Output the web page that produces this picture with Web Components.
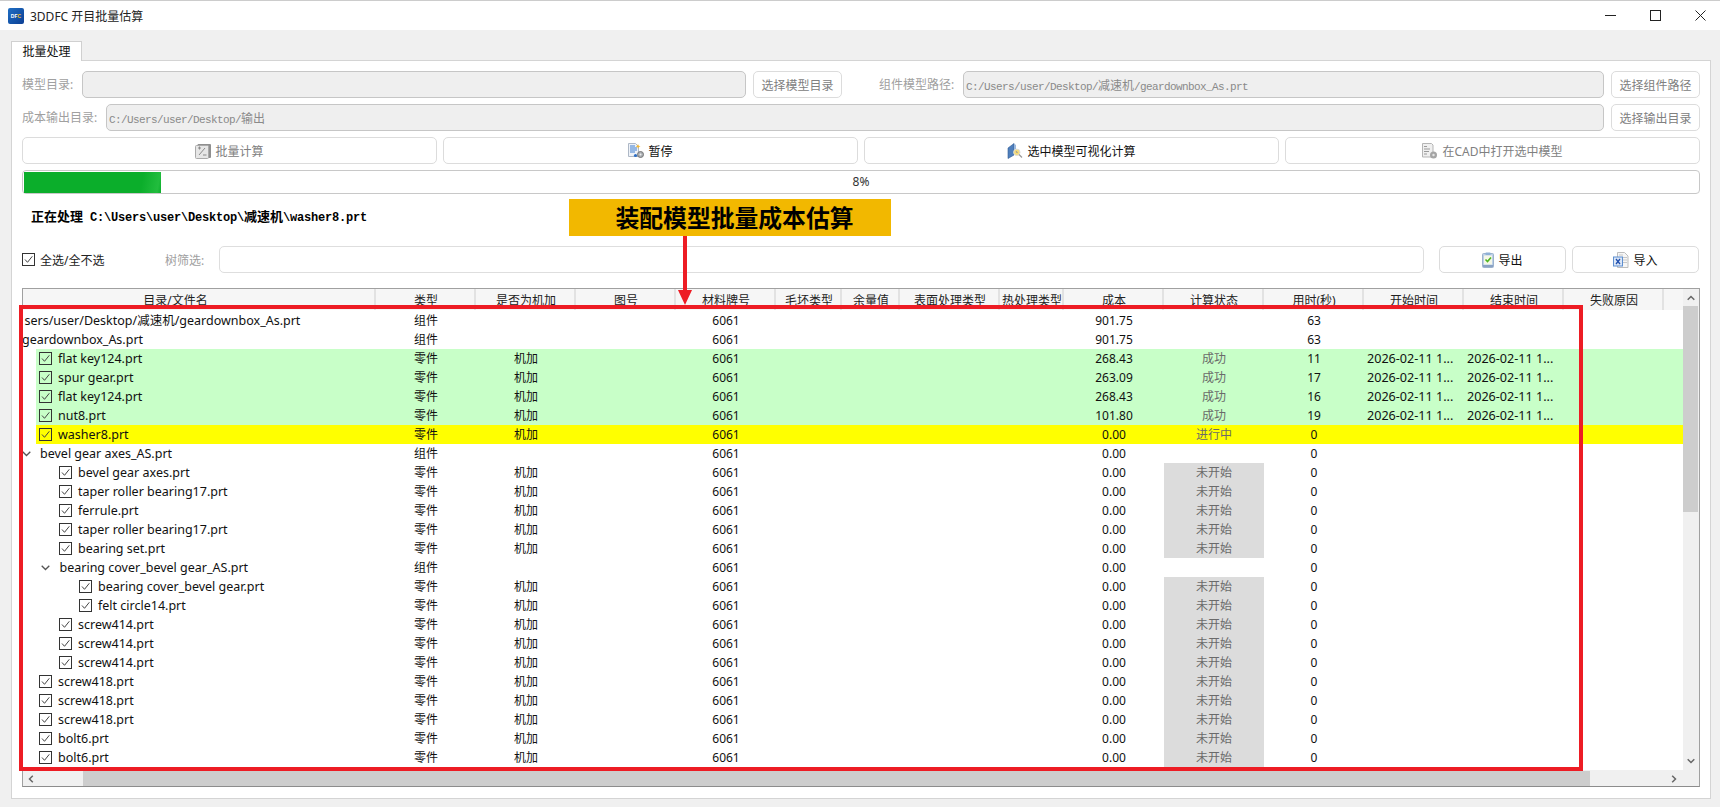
<!DOCTYPE html>
<html lang="zh">
<head>
<meta charset="utf-8">
<title>3DDFC 开目批量估算</title>
<style>
  html, body {
    margin: 0;
    height: 807px;
    overflow: hidden;
    background: #f0f0f0;
    font: 12px "Noto Sans", "Noto Sans CJK SC", sans-serif;
    color: #111;
  }
  body { position: relative; }
</style>
</head>
<body>
<title-bar>3DDFC 开目批量估算</title-bar>
<tab-pane label="批量处理">
  <form-row>
    <field-label style="width:60px">模型目录:</field-label>
    <path-field style="width:664px"></path-field>
    <ui-button style="width:89px;margin-left:7px" disabled>选择模型目录</ui-button>
    <field-label style="width:84px;margin-left:37px">组件模型路径:</field-label>
    <path-field style="flex:1">C:/Users/user/Desktop/减速机/geardownbox_As.prt</path-field>
    <ui-button style="width:89px;margin-left:7px" disabled>选择组件路径</ui-button>
  </form-row>
  <form-row>
    <field-label style="width:84px">成本输出目录:</field-label>
    <path-field style="flex:1">C:/Users/user/Desktop/输出</path-field>
    <ui-button style="width:89px;margin-left:7px" disabled>选择输出目录</ui-button>
  </form-row>
  <form-row class="actions">
    <ui-button style="flex:1" icon="calc" disabled>批量计算</ui-button>
    <ui-button style="flex:1;margin-left:6px" icon="pause">暂停</ui-button>
    <ui-button style="flex:1;margin-left:6px" icon="visual">选中模型可视化计算</ui-button>
    <ui-button style="flex:1;margin-left:6px" icon="cad" disabled>在CAD中打开选中模型</ui-button>
  </form-row>
  <progress-strip value="8"></progress-strip>
  <status-line>正在处理 C:\Users\user\Desktop\减速机\washer8.prt</status-line>
  <filter-row></filter-row>
  <tree-table></tree-table>
</tab-pane>
<annotation-overlay></annotation-overlay>

<script>
  const ICONS = {
    calc: `<svg width="16" height="16" viewBox="0 0 16 16"><rect x="2.5" y="1" width="13.500" height="14" rx="1" fill="#8f8f8f"/><rect x="0.5" y="2.5" width="13" height="13" rx="1" fill="#e6e6e6" stroke="#aaa"/><path d="M3 5h3M4.500 3.500v3M8 12h3.500M4 12l6-7" stroke="#8a8a8a" fill="none"/></svg>`,
    pause: `<svg width="16" height="16" viewBox="0 0 16 16"><path d="M.5.5h7l3 3v10H.5z" fill="#eef2f8" stroke="#aeb8c6"/><path d="M2 3h5M2 5h7M2 7h7M2 9h5" stroke="#3f7fd0"/><path d="M10 1l.8 1.700 1.700.6-1.700.7-.8 1.700-.7-1.700-1.600-.7 1.600-.6z" fill="#f2b632"/><circle cx="7.500" cy="12.500" r="1.600" fill="#2f6fc4"/><circle cx="12.500" cy="11.500" r="3" fill="#a9adb2" stroke="#777"/><circle cx="12.500" cy="11.500" r="1" fill="#eee"/></svg>`,
    visual: `<svg width="16" height="16" viewBox="0 0 16 16"><path d="M1 5l6-4.500V12l-6 3.500z" fill="#4f7fbc" stroke="#2f5a94" stroke-width=".6"/><path d="M7 .5l2 1.500v5H7z" fill="#9db9dc"/><circle cx="9.800" cy="9.300" r="3.200" fill="#f6dc78" stroke="#dcdcdc"/><path d="M9 8.300l1.500 1.500M12 11.500l3 3" stroke="#9a9a9a" stroke-width="1.200"/></svg>`,
    cad: `<svg width="16" height="16" viewBox="0 0 16 16"><path d="M.5.5h9l1.500 1.500v12H.5z" fill="#f0f0f0" stroke="#b5b5b5"/><path d="M2 3.500h3M2 6h6M2 8.500h5M2 11h3" stroke="#9a9a9a"/><circle cx="11.500" cy="12" r="3.500" fill="#a5a5a5"/><circle cx="11.500" cy="12" r="1.200" fill="#e4e4e4"/></svg>`,
    clip: `<svg width="12" height="16" viewBox="0 0 12 16"><rect x=".5" y="1.500" width="11" height="14" rx="1" fill="#bcd0e8" stroke="#9cb2cc"/><rect x="2" y="3.500" width="8" height="9" fill="#f5f7e8"/><rect x="3.500" y=".5" width="5" height="2.500" rx=".5" fill="#8fb0d6"/><path d="M3.500 7.500l2 2 3.500-4" stroke="#4fb51f" stroke-width="1.600" fill="none"/><rect x="1" y="13" width="10" height="2" fill="#8aa2c4"/></svg>`,
    xls: `<svg width="16" height="16" viewBox="0 0 16 16"><path d="M4.500.5h7l3.500 3.500v11.500H4.500z" fill="#f6f6f6" stroke="#bdbdbd"/><path d="M10 5.500h4M10 8h4M10 10.500h4M6 3h4" stroke="#c8c8c8"/><rect x=".5" y="5" width="9" height="9" fill="#dbe6f6" stroke="#5d8ed0"/><path d="M3 7l4 5M7 7l-4 5" stroke="#1f4fae" stroke-width="1.300"/></svg>`
  };

  const wrapCjk = text => text.replace(/[^\x00-\x7f]+/g, m => `<span class="cjk">${m}</span>`);

  class TitleBar extends HTMLElement {
    constructor() {
      super();
      this.attachShadow({ mode: 'open' }).innerHTML = `
        <style>
          :host { display: flex; align-items: center; height: 29px; background: #fff; border-top: 1px solid #ccc; }
          .logo { width: 16px; height: 16px; margin-left: 8px; border-radius: 2px; background: linear-gradient(135deg, #1f6fc4, #0c3f94); color: #fff; font: bold 5px/16px "Liberation Sans", sans-serif; text-align: center; }
          .logo b { color: #f6c21c; }
          .text { margin-left: 6px; font-size: 12px; color: #222; flex: 1; }
          svg { display: block; margin-left: 34px; }
          .ctls { display: flex; margin-right: 14px; }
        </style>
        <div class="logo">DF<b>C</b></div>
        <div class="text"><slot></slot></div>
        <div class="ctls">
          <svg width="11" height="11"><path d="M0 5.500h11" stroke="#222"/></svg>
          <svg width="11" height="11"><rect x=".5" y=".5" width="10" height="10" fill="none" stroke="#222"/></svg>
          <svg width="11" height="11"><path d="M.5.5l10 10M10.500.5l-10 10" stroke="#222" fill="none"/></svg>
        </div>`;
    }
  }
  customElements.define('title-bar', TitleBar);

  class TabPane extends HTMLElement {
    constructor() {
      super();
      this.attachShadow({ mode: 'open' }).innerHTML = `
        <style>
          :host { display: block; padding: 11px 9px 0 11px; }
          .head { height: 19px; }
          .tab { box-sizing: border-box; width: 71px; height: 20px; line-height: 19px; text-align: center; background: #fff; border: 1px solid #d0d0d0; border-bottom: 0; color: #111; position: relative; z-index: 1; }
          .body { box-sizing: border-box; height: 739px; background: #fff; border: 1px solid #d4d4d4; padding: 10px 10px 0; display: flex; flex-direction: column; }
        </style>
        <div class="head"><div class="tab"></div></div>
        <div class="body"><slot></slot></div>`;
    }
    connectedCallback() {
      this.shadowRoot.querySelector('.tab').textContent = this.getAttribute('label');
    }
  }
  customElements.define('tab-pane', TabPane);

  class FormRow extends HTMLElement {
    constructor() {
      super();
      this.attachShadow({ mode: 'open' }).innerHTML = `
        <style>:host { display: flex; align-items: stretch; height: 27px; margin-bottom: 6px; flex: none; }</style>
        <slot></slot>`;
    }
  }
  customElements.define('form-row', FormRow);

  class FieldLabel extends HTMLElement {
    constructor() {
      super();
      this.attachShadow({ mode: 'open' }).innerHTML = `
        <style>:host { display: block; flex: none; line-height: 27px; color: #a0a0a0; white-space: nowrap; }</style>
        <slot></slot>`;
    }
  }
  customElements.define('field-label', FieldLabel);

  class PathField extends HTMLElement {
    constructor() {
      super();
      this.attachShadow({ mode: 'open' }).innerHTML = `
        <style>
          :host { display: block; box-sizing: border-box; background: #efefef; border: 1px solid #c6c6c6; border-radius: 5px; padding-left: 2px; min-width: 0;
                  font: 11px/25px "Liberation Mono", monospace; letter-spacing: -0.6px; color: #8a8a8a; white-space: nowrap; overflow: hidden; }
          .cjk { font: 12px/25px "Noto Sans CJK SC", sans-serif; letter-spacing: 0; }
        </style>
        <span id="t"></span>`;
    }
    connectedCallback() {
      this.shadowRoot.getElementById('t').innerHTML = wrapCjk(this.textContent);
    }
  }
  customElements.define('path-field', PathField);

  class UiButton extends HTMLElement {
    constructor() {
      super();
      this.attachShadow({ mode: 'open' }).innerHTML = `
        <style>
          :host { display: flex; box-sizing: border-box; align-items: center; justify-content: center; flex: none; min-width: 0; background: #fff; border: 1px solid #dcdcdc; border-radius: 5px; color: #111; white-space: nowrap; }
          :host([disabled]) { color: #808080; }
          #i { display: flex; margin-right: 4px; }
          #i:empty { display: none; }
        </style>
        <span id="i"></span><slot></slot>`;
    }
    connectedCallback() {
      const icon = this.getAttribute('icon');
      if (icon) this.shadowRoot.getElementById('i').innerHTML = ICONS[icon];
    }
  }
  customElements.define('ui-button', UiButton);

  class ProgressStrip extends HTMLElement {
    constructor() {
      super();
      this.attachShadow({ mode: 'open' }).innerHTML = `
        <style>
          :host { display: block; box-sizing: border-box; flex: none; position: relative; height: 24px; border: 1px solid #c8c8c8; border-radius: 4px; background: #fff; }
          .chunk { position: absolute; left: 1px; top: 1px; bottom: 0; width: 137px; background: linear-gradient(100deg, #0bae2b 85%, #22bd3e 97%, #0bae2b); }
          .pct { display: block; text-align: center; line-height: 22px; color: #333; position: relative; }
        </style>
        <div class="chunk"></div><span class="pct"></span>`;
    }
    connectedCallback() {
      this.shadowRoot.querySelector('.pct').textContent = this.getAttribute('value') + '%';
    }
  }
  customElements.define('progress-strip', ProgressStrip);

  class StatusLine extends HTMLElement {
    constructor() {
      super();
      this.attachShadow({ mode: 'open' }).innerHTML = `
        <style>
          :host { display: block; flex: none; height: 52px; padding-left: 9px; box-sizing: border-box; padding-top: 12px; font: bold 12px/20px "Liberation Mono", monospace; letter-spacing: -0.2px; white-space: nowrap; color: #000; }
          .cjk { font: bold 13px/20px "Noto Sans CJK SC", sans-serif; letter-spacing: 0; }
        </style>
        <span id="t"></span>`;
    }
    connectedCallback() {
      this.shadowRoot.getElementById('t').innerHTML = wrapCjk(this.textContent);
    }
  }
  customElements.define('status-line', StatusLine);

  class CheckBox extends HTMLElement {
    constructor() {
      super();
      this.attachShadow({ mode: 'open' }).innerHTML = `
        <style>:host { display: block; width: 13px; height: 13px; flex: none; } svg { display: block; }</style>
        <svg width="13" height="13" viewBox="0 0 13 13"><rect x=".5" y=".5" width="12" height="12" fill="none" stroke="#333"/><path d="M3 6.500l2.500 2.800 4.800-6" fill="none" stroke="#444"/></svg>`;
    }
  }
  customElements.define('check-box', CheckBox);

  class FilterRow extends HTMLElement {
    constructor() {
      super();
      this.attachShadow({ mode: 'open' }).innerHTML = `
        <style>
          :host { display: flex; flex: none; height: 27px; align-items: center; margin-bottom: 15px; }
          .all { margin-left: 5px; width: 125px; color: #222; }
          .lab { width: 54px; color: #a0a0a0; }
          .search { box-sizing: border-box; width: 1205px; height: 27px; border: 1px solid #dedede; border-radius: 5px; background: #fff; }
          ui-button { height: 27px; }
        </style>
        <check-box></check-box>
        <span class="all">全选/全不选</span>
        <span class="lab">树筛选:</span>
        <div class="search"></div>
        <ui-button style="width:127px;margin-left:15px" icon="clip">导出</ui-button>
        <ui-button style="width:127px;margin-left:6px" icon="xls">导入</ui-button>`;
    }
  }
  customElements.define('filter-row', FilterRow);

  const COLS = '353px 100px 100px 100px 100px 66px 58px 100px 64px 100px 100px 100px 100px 100px 100px 1fr';

  class TreeRow extends HTMLElement {
    constructor() {
      super();
      this.attachShadow({ mode: 'open' }).innerHTML = `
        <style>
          :host { display: grid; grid-template-columns: ${COLS}; height: 19px; line-height: 19px; text-align: center; color: #111; white-space: nowrap; }
          :host(.done) { background: linear-gradient(to right, transparent 13px, #c8ffc8 13px); }
          :host(.run) { background: linear-gradient(to right, transparent 13px, #ffff00 13px); }
          .clip { overflow: hidden; }
          .name { display: flex; align-items: center; text-align: left; font-size: 12.5px; }
          .name check-box { margin-right: 6px; }
          .arrow { flex: none; width: 12px; display: flex; justify-content: center; margin-right: 8px; }
          .status { color: #6a6a6a; }
          .status.idle { background: #dcdcdc; }
          .time { text-align: left; padding-left: 3px; overflow: hidden; font-size: 12.6px; }
        </style>`;
    }
    set data(r) {
      const head = r.part
        ? `<check-box></check-box><span>${r.name}</span>`
        : (r.open ? `<span class="arrow"><svg width="9" height="6"><path d="M.7.7l3.800 3.800L8.300.7" fill="none" stroke="#555" stroke-width="1.300"/></svg></span>` : '') + `<span>${r.name}</span>`;
      const idle = r.status === '未开始' ? 'idle' : '';
      this.shadowRoot.innerHTML += `
        <div class="clip"><div class="name" style="margin-left:${r.x}px">${head}</div></div>
        <div>${r.part ? '零件' : '组件'}</div><div>${r.part ? '机加' : ''}</div><div></div><div>6061</div>
        <div></div><div></div><div></div><div></div>
        <div>${r.cost}</div>
        <div class="status ${idle}">${r.status || ''}</div>
        <div>${r.secs}</div>
        <div class="time">${r.start || ''}</div><div class="time">${r.start || ''}</div>
        <div></div><div></div>`;
    }
  }
  customElements.define('tree-row', TreeRow);

  const part = (x, name, cost, secs, status, start) => ({ part: true, x, name, cost, secs, status, start });
  const asm = (x, name, cost, secs, open) => ({ x, name, cost, secs, open });
  const STAMP = '2026-02-11 1...';
  const ROWS = [
    asm(1.5, 'sers/user/Desktop/减速机/geardownbox_As.prt', '901.75', 63),
    asm(-1, 'geardownbox_As.prt', '901.75', 63),
    { ...part(16, 'flat key124.prt', '268.43', 11, '成功', STAMP), cls: 'done' },
    { ...part(16, 'spur gear.prt', '263.09', 17, '成功', STAMP), cls: 'done' },
    { ...part(16, 'flat key124.prt', '268.43', 16, '成功', STAMP), cls: 'done' },
    { ...part(16, 'nut8.prt', '101.80', 19, '成功', STAMP), cls: 'done' },
    { ...part(16, 'washer8.prt', '0.00', 0, '进行中'), cls: 'run' },
    asm(-3, 'bevel gear axes_AS.prt', '0.00', 0, true),
    part(36, 'bevel gear axes.prt', '0.00', 0, '未开始'),
    part(36, 'taper roller bearing17.prt', '0.00', 0, '未开始'),
    part(36, 'ferrule.prt', '0.00', 0, '未开始'),
    part(36, 'taper roller bearing17.prt', '0.00', 0, '未开始'),
    part(36, 'bearing set.prt', '0.00', 0, '未开始'),
    asm(16.5, 'bearing cover_bevel gear_AS.prt', '0.00', 0, true),
    part(56, 'bearing cover_bevel gear.prt', '0.00', 0, '未开始'),
    part(56, 'felt circle14.prt', '0.00', 0, '未开始'),
    part(36, 'screw414.prt', '0.00', 0, '未开始'),
    part(36, 'screw414.prt', '0.00', 0, '未开始'),
    part(36, 'screw414.prt', '0.00', 0, '未开始'),
    part(16, 'screw418.prt', '0.00', 0, '未开始'),
    part(16, 'screw418.prt', '0.00', 0, '未开始'),
    part(16, 'screw418.prt', '0.00', 0, '未开始'),
    part(16, 'bolt6.prt', '0.00', 0, '未开始'),
    part(16, 'bolt6.prt', '0.00', 0, '未开始')
  ];
  const HEADERS = ['目录/文件名', '类型', '是否为机加', '图号', '材料牌号', '毛坯类型', '余量值', '表面处理类型', '热处理类型', '成本', '计算状态', '用时(秒)', '开始时间', '结束时间', '失败原因', ''];

  class TreeTable extends HTMLElement {
    constructor() {
      super();
      this.attachShadow({ mode: 'open' }).innerHTML = `
        <style>
          :host { display: grid; flex: none; box-sizing: border-box; height: 499px; border: 1px solid #a0a0a0; border-bottom-color: #8c8c8c; grid-template-columns: 1660px 16px; grid-template-rows: 21px 460px 16px; background: #f0f0f0; }
          .head { display: grid; grid-template-columns: ${COLS}; background: #f6f6f6; line-height: 23px; text-align: center; color: #222; white-space: nowrap; overflow: hidden; }
          .head div { box-sizing: border-box; border-left: 2px solid #e2e2e2; margin-left: -2px; overflow: hidden; }
          .head div:first-child { padding-right: 48px; border-left: 0; margin-left: 0; }
          .rows { background: #fff; padding-top: 1px; overflow: hidden; box-sizing: border-box; }
          .v { grid-column: 2; grid-row: 1 / 3; position: relative; background: #f0f0f0; }
          .v .thumb { position: absolute; left: 0; width: 15px; top: 17px; height: 206px; background: #cdcdcd; }
          .v svg { position: absolute; left: 4px; }
          .h { position: relative; background: #f0f0f0; }
          .h .thumb { position: absolute; left: 60px; width: 1507px; top: 1px; bottom: 0; background: #cdcdcd; }
          .h svg { position: absolute; top: 5px; }
        </style>
        <div class="head">${HEADERS.map(t => `<div>${t}</div>`).join('')}</div>
        <div class="v">
          <svg style="top:6px" width="8" height="6"><path d="M.7 4.800L4 1.500l3.300 3.300" fill="none" stroke="#666" stroke-width="1.500"/></svg>
          <div class="thumb"></div>
          <svg style="top:469px" width="8" height="6"><path d="M.7 1.200L4 4.500l3.300-3.300" fill="none" stroke="#666" stroke-width="1.500"/></svg>
        </div>
        <div class="rows"></div>
        <div class="h">
          <svg style="left:5px" width="6" height="8"><path d="M4.800.7L1.500 4l3.300 3.300" fill="none" stroke="#666" stroke-width="1.500"/></svg>
          <div class="thumb"></div>
          <svg style="left:1648px" width="6" height="8"><path d="M1.200.7L4.500 4 1.200 7.300" fill="none" stroke="#666" stroke-width="1.500"/></svg>
        </div>
        <div></div>`;
    }
    connectedCallback() {
      const box = this.shadowRoot.querySelector('.rows');
      for (const r of ROWS) {
        const row = document.createElement('tree-row');
        if (r.cls) row.className = r.cls;
        row.data = r;
        box.appendChild(row);
      }
    }
  }
  customElements.define('tree-table', TreeTable);

  class AnnotationOverlay extends HTMLElement {
    constructor() {
      super();
      this.attachShadow({ mode: 'open' }).innerHTML = `
        <style>
          :host { display: block; position: absolute; left: 0; top: 0; width: 0; height: 0; }
          .box { position: absolute; left: 19px; top: 305px; width: 1564px; height: 466px; box-sizing: border-box; border: 4px solid #ed1c24; }
          .banner { position: absolute; left: 569px; top: 199px; width: 322px; height: 37px; box-sizing: border-box; padding-left: 9px; background: #f2b800; color: #000; font: bold 23.8px/36px "Noto Sans CJK SC", sans-serif; text-align: center; white-space: nowrap; }
          svg { position: absolute; left: 677px; top: 236px; }
        </style>
        <div class="box"></div>
        <svg width="16" height="70" viewBox="0 0 16 70"><path d="M6 0h4v55H6z" fill="#ed1c24"/><path d="M1 54h14L8 69z" fill="#ed1c24"/></svg>
        <div class="banner">装配模型批量成本估算</div>`;
    }
  }
  customElements.define('annotation-overlay', AnnotationOverlay);
</script>
</body>
</html>
